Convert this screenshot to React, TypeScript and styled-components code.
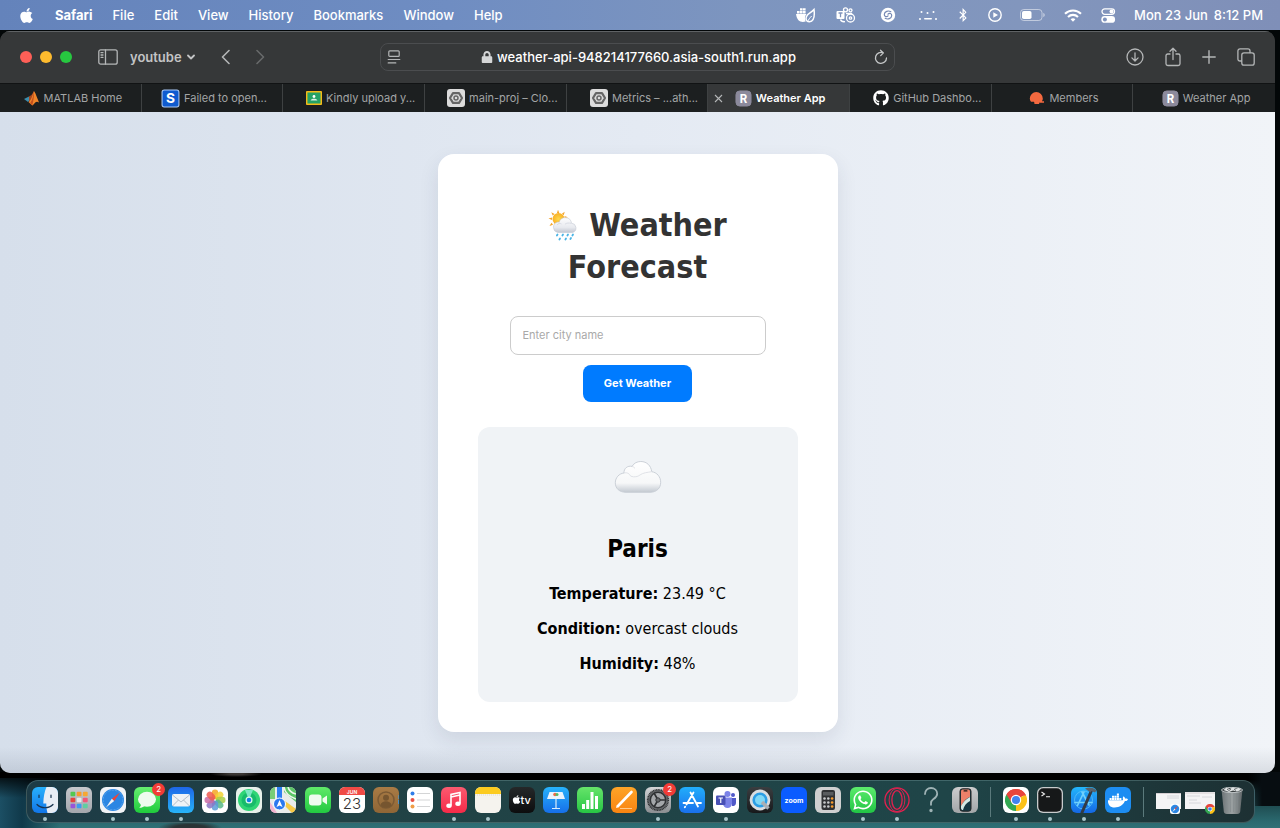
import React from "react";
import styled, { createGlobalStyle } from "styled-components";
import { FaApple, FaBluetoothB, FaDocker, FaGithub, FaLock, FaWhatsapp } from "react-icons/fa";

const uiFont = `Inter, "Liberation Sans", sans-serif`;
const pageFont = `"DejaVu Sans Condensed", "DejaVu Sans", "Noto Sans", sans-serif`;

const GlobalStyle = createGlobalStyle`
  *, *::before, *::after { box-sizing: border-box; }
  body { margin: 0; background: #030708; font-family: ${uiFont}; }
  button, input { font-family: inherit; }
  svg { display: block; flex: none; }
`;

/* ---------- desktop ---------- */

const Desktop = styled.div`
  min-height: 100vh;
  display: flex;
  flex-direction: column;
  background:
    radial-gradient(ellipse 32px 7px at 190px 100%, #2a3436 50%, transparent),
    radial-gradient(ellipse 26px 3px at 236px calc(100% - 54px), #3a3634 30%, transparent),
    linear-gradient(180deg, #000 0, transparent 26px) 0 100% / 60px 56px no-repeat,
    linear-gradient(90deg, #1c4f64 0, #10394a 22px, transparent 60px) 0 100% / 100% 50px no-repeat,
    linear-gradient(90deg, transparent calc(100% - 32px), #070d11 calc(100% - 18px)) 0 calc(100% - 22px) / 100% 34px no-repeat,
    linear-gradient(180deg, #000 0, #000 8px, #17383c 22px, #2b6a70 50px, #307076 56px) 0 100% / 100% 56px no-repeat,
    #030708;
`;

const MenuBar = styled.header`
  height: 30px;
  padding: 0 17px 0 18px;
  display: flex;
  align-items: center;
  justify-content: space-between;
  background: linear-gradient(90deg, #6483bb 0%, #6f8dc2 35%, #7d95bf 58%, #8296bd 80%, #7f8fb8 100%);
  color: #fff;
  font-size: 13px;
  font-weight: 500;
  white-space: nowrap;
`;

const MenuGroup = styled.nav`
  display: flex;
  align-items: center;
  gap: 20px;
`;

const MenuButton = styled.button<{ $bold?: boolean }>`
  padding: 0;
  border: 0;
  background: none;
  color: inherit;
  font-size: 13px;
  line-height: 16px;
  font-weight: ${(p) => (p.$bold ? 700 : 500)};
`;

const StatusGroup = styled.div`
  display: flex;
  align-items: center;
  gap: 18px;
`;

const Clock = styled.time`
  display: flex;
  gap: 6px;
`;

/* ---------- browser window ---------- */

const BrowserWindow = styled.main`
  flex: 1;
  margin: 1px 5px 0 0;
  display: flex;
  flex-direction: column;
  border-radius: 10px;
  overflow: hidden;
  background: #363839;
`;

const Toolbar = styled.div`
  height: 52px;
  padding: 0 20px;
  display: grid;
  grid-template-columns: 1fr 515px 1fr;
  align-items: center;
  box-shadow: inset 0 1px #5f6264;
  background: #363839;
  color: #b4b6b7;
`;

const ToolGroup = styled.div<{ $gap: number; $end?: boolean }>`
  display: flex;
  align-items: center;
  gap: ${(p) => p.$gap}px;
  justify-content: ${(p) => (p.$end ? "flex-end" : "flex-start")};
`;

const TrafficLight = styled.button<{ $color: string }>`
  width: 12px;
  height: 12px;
  padding: 0;
  border: 0;
  border-radius: 50%;
  background: ${(p) => p.$color};
`;

const IconButton = styled.button<{ $dim?: boolean }>`
  padding: 0;
  border: 0;
  background: none;
  color: ${(p) => (p.$dim ? "#686a6b" : "#b4b6b7")};
`;

const ProfileButton = styled(IconButton)`
  display: flex;
  align-items: center;
  gap: 5px;
  color: #c3c4c5;
  font-size: 13px;
  line-height: 18px;
  font-weight: 600;
`;

const AddressBar = styled.div`
  height: 28px;
  padding: 0 6px;
  display: grid;
  grid-template-columns: 16px 1fr 14px;
  align-items: center;
  border: 1px solid #4b4d4f;
  border-radius: 8px;
  color: #fff;
`;

const Address = styled.span`
  display: flex;
  align-items: center;
  justify-content: center;
  gap: 4px;
  font-size: 13px;
  font-weight: 500;
`;

const TabStrip = styled.div`
  height: 29px;
  display: grid;
  grid-template-columns: repeat(9, minmax(0, 1fr));
  border-top: 1px solid #111314;
  background: #1c1f20;
`;

const Tab = styled.button<{ $active?: boolean; $long?: boolean }>`
  padding: 0 0 0 ${(p) => (p.$long ? 14 : p.$active ? 0 : 4)}px;
  display: flex;
  align-items: center;
  justify-content: center;
  gap: 4px;
  border: 0;
  border-right: 1px solid #3e4142;
  background: ${(p) => (p.$active ? "#363839" : "transparent")};
  color: ${(p) => (p.$active ? "#fff" : "#a3a5a6")};
  font-size: 11px;
  font-weight: ${(p) => (p.$active ? 600 : 400)};
  white-space: nowrap;
  &:last-child { border-right: 0; }
`;

const CloseMark = styled.svg`
  margin-right: 8px;
  margin-left: -18px;
`;

const Viewport = styled.div`
  flex: 1;
  padding: 40px 0;
  display: flex;
  align-items: center;
  justify-content: center;
  background:
    linear-gradient(0deg, rgba(70, 80, 100, 0.14), transparent 26px),
    linear-gradient(90deg, #d6dfeb 0%, #e4eaf3 50%, #f1f4f8 100%);
`;

/* ---------- weather app ---------- */

const Card = styled.section`
  width: 400px;
  padding: 50px 40px 30px;
  border-radius: 16px;
  background: #fff;
  box-shadow: 0 8px 20px rgba(40, 50, 80, 0.1);
  color: #000;
  font-family: ${pageFont};
  text-align: center;
`;

const Title = styled.h1`
  margin: 0 0 28px;
  color: #333;
  font-size: 32px;
  line-height: 42px;
  font-weight: 700;
`;

const TitleIcon = styled.svg`
  && { display: inline-block; }
  vertical-align: -5px;
`;

const SearchForm = styled.form`
  display: flex;
  flex-direction: column;
  align-items: center;
  gap: 10px;
  font-family: ${uiFont};
`;

const CityInput = styled.input`
  width: 80%;
  height: 39px;
  padding: 0 12px;
  border: 1px solid #ccc;
  border-radius: 8px;
  background: #fff;
  font-size: 11px;
  &::placeholder { color: #a9a9a9; opacity: 1; }
`;

const SubmitButton = styled.button`
  height: 37px;
  padding: 0 21px;
  border: 0;
  border-radius: 8px;
  background: #007bff;
  color: #fff;
  font-size: 11px;
  font-weight: 700;
`;

const Result = styled.div`
  margin-top: 25px;
  padding: 30px 20px 21px;
  display: flex;
  flex-direction: column;
  align-items: center;
  border-radius: 12px;
  background: #f0f3f6;
`;

const City = styled.h2`
  margin: 38px 0 11px;
  font-size: 24px;
  line-height: 32px;
  font-weight: 700;
`;

const Reading = styled.p`
  margin: 0;
  font-size: 16px;
  line-height: 35px;
`;

/* ---------- dock ---------- */

const DockArea = styled.footer`
  height: 55px;
  padding: 7px 25px 0 26px;
`;

const DockBar = styled.div`
  height: 43px;
  padding: 6px 10px 0 5px;
  display: flex;
  align-items: flex-start;
  border: 1px solid rgba(150, 190, 190, 0.28);
  border-radius: 12px;
  background: linear-gradient(90deg, #1d3b46, #214245 25%, #1f4548 75%, #1d3033);
`;

const DockApps = styled.div<{ $grow?: boolean }>`
  flex: ${(p) => (p.$grow ? 1 : "none")};
  display: flex;
  justify-content: space-between;
  gap: 8px;
`;

const DockItem = styled.button`
  position: relative;
  width: 26px;
  padding: 0;
  display: flex;
  flex-direction: column;
  align-items: center;
  gap: 4px;
  border: 0;
  background: none;
`;

const RunningDot = styled.span`
  width: 4px;
  height: 4px;
  border-radius: 50%;
  background: #a9c6ca;
`;

const Badge = styled.span`
  position: absolute;
  top: -4px;
  right: -5px;
  width: 13px;
  height: 13px;
  border-radius: 50%;
  background: #f23b36;
  color: #fff;
  font-size: 8px;
  line-height: 13px;
  text-align: center;
`;

const Divider = styled.span`
  width: 1px;
  height: 30px;
  margin: 0 12px;
  background: #5b7a7c;
`;

const DockWindows = styled.div`
  display: flex;
  align-items: flex-start;
  gap: 4px;
`;

/* ---------- menu bar glyphs ---------- */

const DockerLeaf = () => (
  <svg width="20" height="18" viewBox="0 0 20 18" fill="#fff">
    <path d="M0 8h10.500c-1.800 2-2 5-.8 7.500-4.500 1.300-8.700 0-9.700-7.500z" />
    <path d="M1 5h2.600v2.600H1zM4 5h2.600v2.600H4zM7 5h2.600v2.600H7zM4 2.200h2.600v2.300H4zM7 2.200h2.600v2.300H7z" />
    <path d="M18 3.500c.8 6 .5 11.500-4.500 12.200-3.300.3-4.200-3-2.800-5.600C12 7.500 15.300 6.800 18 3.500z" fill="none" stroke="#fff" strokeWidth="1.500" />
    <path d="M11.500 16c1-2.500 2.400-4.300 4.200-6" fill="none" stroke="#fff" />
  </svg>
);

const TeamsStatus = () => (
  <svg width="24" height="18" viewBox="0 0 24 18" fill="none" stroke="#fff" strokeWidth="1.300">
    <rect x="2.500" y="5" width="8" height="8" rx="1" fill="#fff" stroke="none" />
    <path d="M4.500 7h4M6.500 7v4.300" stroke="#8094bd" />
    <circle cx="11.500" cy="3.800" r="2" />
    <circle cx="16.500" cy="4.300" r="1.500" />
    <path d="M6.500 13.500c.5 1.600 2 2.500 4.500 2.200M12 7.500h6" />
    <circle cx="16.500" cy="12" r="4" />
    <circle cx="16.500" cy="12" r="1.200" />
  </svg>
);

const Swirl = () => (
  <svg width="24" height="16" viewBox="0 0 24 16">
    <circle cx="12" cy="8" r="7.200" fill="#fff" />
    <path d="M14.800 4.700c-2.600-1.600-6.200-.2-6.500 2.600-.2 2.200 2.300 3.200 3.700 1.500M9.200 11.300c2.600 1.600 6.200.2 6.500-2.600.2-2.200-2.300-3.200-3.700-1.500" fill="none" stroke="#7488b4" strokeWidth="1.200" strokeLinecap="round" />
  </svg>
);

const DotsFace = () => (
  <svg width="20" height="14" viewBox="0 0 20 14" fill="#fff">
    <circle cx="3.500" cy="4" r="1" /><circle cx="9.500" cy="5" r="1" /><circle cx="15.500" cy="4" r="1" />
    <circle cx="2" cy="11" r="1" /><circle cx="18" cy="11" r="1" />
    <rect x="6" y="10" width="8" height="1.600" rx=".8" />
  </svg>
);

const PlayCircle = () => (
  <svg width="14" height="14" viewBox="0 0 14 14">
    <circle cx="7" cy="7" r="6.200" fill="none" stroke="#fff" strokeWidth="1.400" />
    <path d="M5.300 4.200 10 7l-4.700 2.800z" fill="#fff" />
  </svg>
);

const Battery = () => (
  <svg width="26" height="12" viewBox="0 0 26 12">
    <rect x=".5" y=".5" width="21.500" height="11" rx="3.200" fill="none" stroke="#fff" strokeOpacity=".5" />
    <rect x="2" y="2" width="9.500" height="8" rx="1.800" fill="#fff" />
    <path d="M23.300 4v4c1-.3 1.400-1.100 1.400-2s-.4-1.700-1.400-2z" fill="#fff" fillOpacity=".55" />
  </svg>
);

const Wifi = () => (
  <svg width="18" height="13" viewBox="0 0 18 13" fill="none" stroke="#fff" strokeWidth="2.100">
    <path d="M1 4.800c4.500-4.400 11.500-4.400 16 0" />
    <path d="M4 7.900c2.900-2.700 7.100-2.700 10 0" />
    <path d="M9 12.700 6.600 10.200c1.400-1.200 3.400-1.200 4.800 0z" fill="#fff" stroke="none" />
  </svg>
);

const ControlCentre = () => (
  <svg width="16" height="15" viewBox="0 0 16 15">
    <rect x="2" y=".8" width="12.500" height="5.600" rx="2.800" fill="none" stroke="#fff" strokeWidth="1.300" />
    <circle cx="11.500" cy="3.600" r="2" fill="#fff" />
    <rect x="1.300" y="8" width="13.800" height="6.800" rx="3.400" fill="#fff" />
    <circle cx="4.900" cy="11.400" r="2" fill="#8094bd" />
  </svg>
);

/* ---------- toolbar glyphs ---------- */

const line = { fill: "none", stroke: "currentColor", strokeLinecap: "round", strokeLinejoin: "round" } as const;

const SidebarGlyph = () => (
  <svg width="20" height="16" viewBox="0 0 20 16" {...line} strokeWidth="1.300">
    <rect x=".8" y=".8" width="18.400" height="14.400" rx="2" />
    <path d="M7.500 1v14M3 3.700h2M3 6h2M3 8.300h2" />
  </svg>
);

const Chevron = ({ d, w, h, sw }: { d: string; w: number; h: number; sw: number }) => (
  <svg width={w} height={h} viewBox={`0 0 ${w} ${h}`} {...line} strokeWidth={sw}><path d={d} /></svg>
);

const ReaderGlyph = () => (
  <svg width="14" height="14" viewBox="0 0 14 14" {...line} stroke="#b4b6b7" strokeWidth="1.200">
    <rect x="1.800" y=".8" width="10.400" height="5.600" rx="1" /><path d="M1.200 9.500h11.600M1.200 12.900h7.600" />
  </svg>
);

const ReloadGlyph = () => (
  <svg width="14" height="16" viewBox="0 0 14 16" {...line} stroke="#c4c6c7" strokeWidth="1.300">
    <path d="M9.300 3.900A5.500 5.500 0 1 0 12.500 9M6.500 1.200l2.900 2.700-2.700 2.700" />
  </svg>
);

const DownloadGlyph = () => (
  <svg width="18" height="18" viewBox="0 0 18 18" {...line} strokeWidth="1.300">
    <circle cx="9" cy="9" r="8" /><path d="M9 4.800v8M5.900 9.900 9 13l3.100-3.100" />
  </svg>
);

const ShareGlyph = () => (
  <svg width="16" height="20" viewBox="0 0 16 20" {...line} strokeWidth="1.300">
    <path d="M5 7H2.800C1.700 7 1 7.700 1 8.800v7.900c0 1.100.7 1.800 1.800 1.800h10.400c1.100 0 1.800-.7 1.800-1.800V8.800C15 7.700 14.300 7 13.200 7H11M8 12.500V1.500M5 4.300l3-3 3 3" />
  </svg>
);

const PlusGlyph = () => (
  <svg width="14" height="14" viewBox="0 0 14 14" {...line} strokeWidth="1.400"><path d="M7 .8v12.400M.8 7h12.400" /></svg>
);

const TabsGlyph = () => (
  <svg width="18" height="18" viewBox="0 0 18 18" {...line} strokeWidth="1.300">
    <rect x="4.800" y="4.800" width="12.400" height="12.400" rx="2.200" />
    <path d="M4.500 13H3c-1.300 0-2.100-.8-2.100-2.100V3C.9 1.700 1.700.9 3 .9h7.900c1.300 0 2.100.8 2.100 2.100v1.500" />
  </svg>
);

/* ---------- tab icons ---------- */

const Matlab = () => (
  <svg width="17" height="16" viewBox="0 0 17 16">
    <path d="M1 9 6 6.500l2.500 2L5 12z" fill="#3d8fae" />
    <path d="M6 6.500 8.500 5c1-1 1.700-3 2.500-4L9 9.500l-3 3z" fill="#a9471f" />
    <path d="M11 1c1.800 2.500 3.500 8 5 11.500-1.500-1-2.700-1-4 .2-.8 1-1.600 2.200-2.800 2.800L5.500 12c2.500-.8 4-7 5.500-11z" fill="#f0852a" />
    <path d="M11 1c.2 4-.3 9.500-1.800 14.500l-2-2.500C9.500 10 10.300 5 11 1z" fill="#c44f1c" />
  </svg>
);

const LetterTile = ({ letter, bg, edge }: { letter: string; bg: string; edge?: string }) => (
  <svg width={edge ? 19 : 17} height={edge ? 19 : 17} viewBox="0 0 18 18">
    <rect x="1" y="1" width="16" height="16" rx={edge ? 2 : 4} fill={bg} stroke={edge ?? bg} />
    <text x="9" y="13.500" textAnchor="middle" fontFamily="Inter, sans-serif" fontSize={edge ? 13 : 12} fontWeight="700" fill="#fff">{letter}</text>
  </svg>
);

const Classroom = () => (
  <svg width="16" height="14" viewBox="0 0 16 14">
    <rect x=".7" y=".7" width="14.600" height="12.600" rx=".6" fill="#25a265" stroke="#f5bb18" strokeWidth="1.500" />
    <circle cx="8" cy="5.500" r="1.400" fill="#fff" /><path d="M4.600 9.500c.4-2.300 6.400-2.300 6.800 0z" fill="#d9f0e3" />
  </svg>
);

const CloudConsole = () => (
  <svg width="18" height="18" viewBox="0 0 18 18">
    <rect width="18" height="18" rx="3" fill="#dcdcdc" />
    <path d="M6 4.200h6L15 9l-3 4.800H6L3 9z" fill="none" stroke="#666" strokeWidth="2.200" strokeLinejoin="round" />
    <circle cx="9" cy="9" r="2" fill="none" stroke="#666" strokeWidth="1.500" />
  </svg>
);

const Members = () => (
  <svg width="16" height="14" viewBox="0 0 16 14" fill="#f4693f">
    <path d="M.8 7.500a6.500 6.500 0 0 1 13 0c0 1.300-.5 2.200-1 2.800H15v1.500h-5l.3 1.200H5.500l-.4-2.200H2C1.200 9.900.8 8.700.8 7.500z" />
  </svg>
);

/* ---------- weather pictures ---------- */

const SunRain = () => (
  <TitleIcon width="31" height="32" viewBox="0 0 31 32" role="img" aria-label="Sun behind rain cloud">
    <defs>
      <linearGradient id="rainCloud" x1="0" y1="0" x2="0" y2="1"><stop offset="0" stopColor="#fdfdfe" /><stop offset=".65" stopColor="#e8eaef" /><stop offset="1" stopColor="#c3c7d1" /></linearGradient>
      <radialGradient id="sun"><stop offset="0" stopColor="#ffd84a" /><stop offset="1" stopColor="#f8b026" /></radialGradient>
    </defs>
    <path d="M10 .8l1.300 3.200H8.900zM3.300 3.200l3.300 1.700-1.900 1.700zM.5 9.400l3.500-1v2.500zM1.500 17l2-3.300 1.500 2zM16.700 2.700l-.9 3.500-1.900-1.400zM20 8.200l-3.200.9-.4-2z" fill="#f5a62d" />
    <circle cx="10.500" cy="10" r="6" fill="url(#sun)" />
    <path d="M10 23.500a5.300 5.300 0 0 1-.8-10.300c.7-.2 1.400-.2 2 0a6.300 6.300 0 0 1 12.300 1 4.800 4.800 0 0 1 1.300 9.300z" fill="url(#rainCloud)" stroke="#c4c9d4" strokeWidth=".6" />
    <path d="M9 16c1-1.500 3-2 4.500-1M17 15.200c1.500-1.300 4-1.500 6.300-.8" fill="none" stroke="#cfd3dc" strokeWidth=".7" />
    <path d="M9.500 25.500l-.6 1M15 25.500l-.6 1M20 25.500l-.6 1M25 25.500l-.6 1M12 29.500l-.6 1M18 29.500l-.6 1M23 29l-.6 1" stroke="#4ab4e6" strokeWidth="1.800" strokeLinecap="round" />
  </TitleIcon>
);

const Cloud = () => (
  <svg width="48" height="38" viewBox="0 0 48 38" role="img" aria-label="Cloud">
    <defs>
      <linearGradient id="cloud" x1="0" y1="0" x2="0" y2="1"><stop offset="0" stopColor="#fff" /><stop offset=".7" stopColor="#f6f7f8" /><stop offset="1" stopColor="#c3c9d1" /></linearGradient>
    </defs>
    <path d="M12 35.300C5.500 35.300 1.300 31.500 1.300 25.800c0-5 3.700-9.300 8.700-9.800-.3-4.500 3.600-7.700 8-6.600C20 6 23.200 4.500 26.800 4.500c6 0 10.300 4.300 10.900 10.200 5.300.7 9 5.200 9 10.600 0 5.700-4 10-10.700 10z" fill="url(#cloud)" stroke="#c6ccd4" strokeWidth=".9" />
    <path d="M18 9.400c1.300.3 2.300 1 3 2M10 16c3-.8 5 .2 6.800 3.200 3.500 1.300 7 .6 9.300-1.300 2.500-2 7.500-2.600 11.600-3.200" fill="none" stroke="#dcdfe4" strokeWidth=".9" />
  </svg>
);

/* ---------- dock icons ---------- */

const Tile = ({ fill, to, id, children }: { fill: string; to?: string; id?: string; children?: React.ReactNode }) => (
  <svg width="26" height="26" viewBox="0 0 26 26">
    {to && <defs><linearGradient id={id} x1="0" y1="0" x2="0" y2="1"><stop stopColor={fill} /><stop offset="1" stopColor={to} /></linearGradient></defs>}
    <rect width="26" height="26" rx="6" fill={to ? `url(#${id})` : fill} />
    {children}
  </svg>
);

const Finder = () => (
  <Tile id="finder" fill="#28b0fb" to="#1276e8">
    <path d="M14.500 0H20a6 6 0 0 1 6 6v14a6 6 0 0 1-6 6h-4.500c-.8-3-1.200-6-1.200-9.500h-3C11.500 10 12.500 4.500 14.500 0z" fill="#e8edf4" />
    <path d="M7 8v2.500M19 8v2.500M5 17.500c4 4.300 12 4.300 16 0" fill="none" stroke="#17324d" strokeWidth="1.200" strokeLinecap="round" />
  </Tile>
);

const Launchpad = () => {
  const colors = ["#52c84f", "#f79a2e", "#f5a733", "#e2453f", "#e8e8ea", "#f2567a", "#9856d8", "#3d9df0", "#5fd0a0"];
  return (
    <Tile id="launch" fill="#c6c8cc" to="#a4a7ad">
      {colors.map((c, i) => <rect key={i} x={4.500 + (i % 3) * 6.200} y={4.700 + Math.floor(i / 3) * 6} width="4.800" height="4.600" rx="1" fill={c} />)}
    </Tile>
  );
};

const Compass = () => (
  <>
    <circle cx="13" cy="13" r="11" fill="#2b86e3" />
    <circle cx="13" cy="13" r="9.800" fill="none" stroke="#82c3f8" strokeWidth="1" strokeDasharray=".5 1" />
    <path d="m20 5.500-5.800 8.600-2.400-2.400z" fill="#f04438" /><path d="M6 20.500l5.800-8.800 2.400 2.400z" fill="#f2f4f7" />
  </>
);

const Photos = () => {
  const colors = ["#f5a623", "#f3d334", "#a9cf46", "#58b98a", "#5b9bd8", "#8b75c4", "#c86ba4", "#ee5a4f"];
  return (
    <Tile fill="#fff">
      {colors.map((c, i) => <rect key={c} x="9.800" y="2.500" width="6.400" height="9.700" rx="3.200" fill={c} fillOpacity=".85" transform={`rotate(${i * 45} 13 13)`} />)}
    </Tile>
  );
};

const Maps = () => (
  <svg width="26" height="26" viewBox="0 0 26 26">
    <defs><clipPath id="mapClip"><rect width="26" height="26" rx="6" /></clipPath></defs>
    <g clipPath="url(#mapClip)">
      <rect width="26" height="26" fill="#e9ecea" />
      <path d="M14 0h12v15L14 5z" fill="#5bc566" /><path d="M0 0h5v12H0z" fill="#78cd76" />
      <path d="M14 0c1 7 6 10 12 12M18 0c1 4 4 6 8 7" stroke="#eef5ec" strokeWidth="1.600" fill="none" />
      <path d="M7 0h5v13H7z" fill="#2d7ff2" />
      <path d="M0 15l7 11H0z" fill="#f3b3cf" /><path d="m15 14 11 8v4h-4L13 17z" fill="#f6c945" />
      <circle cx="9.500" cy="17" r="6" fill="#2b79ef" stroke="#fff" /><path d="m9.500 13 3 7-3-1.500-3 1.500z" fill="#fff" />
    </g>
  </svg>
);

const Calendar = () => (
  <Tile fill="#fff">
    <path d="M0 8V6a6 6 0 0 1 6-6h14a6 6 0 0 1 6 6v2z" fill="#f04a45" />
    <text x="13" y="6.500" textAnchor="middle" fontFamily="Inter, sans-serif" fontSize="5" fontWeight="600" fill="#fff">JUN</text>
    <text x="13" y="21.500" textAnchor="middle" fontFamily="Inter, sans-serif" fontSize="15" fontWeight="300" fill="#333">23</text>
  </Tile>
);

const Gear = () => (
  <Tile id="gear" fill="#d2d4d6" to="#8b8e91">
    <circle cx="13" cy="13" r="10.300" fill="#66696c" stroke="#2f3133" strokeWidth="1.600" strokeDasharray="1 .6" />
    <circle cx="13" cy="13" r="7.700" fill="#a4a7aa" stroke="#2f3133" strokeWidth="1.500" />
    <path d="M13 13h8M13 13 9 6M13 13 9 20" stroke="#2f3133" strokeWidth="1.600" /><circle cx="13" cy="13" r="2.200" fill="#65686b" stroke="#2f3133" />
  </Tile>
);

const Chrome = ({ size, x = 0, y = 0 }: { size: number; x?: number; y?: number }) => (
  <svg x={x} y={y} width={size} height={size} viewBox="0 0 24 24">
    <path d="M12 12 1.600 6A12 12 0 0 1 22.400 6z" fill="#e8453c" />
    <path d="M12 12 22.400 6A12 12 0 0 1 12 24z" fill="#fbc116" />
    <path d="M12 12v12A12 12 0 0 1 1.600 6z" fill="#33a852" />
    <path d="M1.600 6 7.300 15 12 7h10.900l-.5-1A12 12 0 0 0 1.600 6z" fill="#e8453c" />
    <circle cx="12" cy="12" r="5.700" fill="#fff" /><circle cx="12" cy="12" r="4.400" fill="#4183f0" />
  </svg>
);

type App = { name: string; icon: React.ReactNode; running?: boolean; badge?: number };

const apps: App[] = [
  { name: "Finder", icon: <Finder />, running: true },
  { name: "Launchpad", icon: <Launchpad /> },
  { name: "Safari", icon: <Tile fill="#f1f3f6"><Compass /></Tile>, running: true },
  { name: "Messages", running: true, badge: 2, icon: (
    <Tile id="msg" fill="#66ef70" to="#1fcb3c"><ellipse cx="13" cy="12.300" rx="9" ry="7.500" fill="#eefbee" /><path d="M7 17c0 2-.8 3-2 3.800 2.200.2 4-.5 5.500-2z" fill="#eefbee" /></Tile>) },
  { name: "Mail", running: true, icon: (
    <Tile id="mail" fill="#1e66e8" to="#27b4f8"><rect x="4" y="7" width="18" height="12.500" rx="1.800" fill="#eff2f6" /><path d="m4.500 8 8.500 7 8.500-7M4.500 19l6-6M21.500 19l-6-6" fill="none" stroke="#a4b0bd" strokeWidth=".8" /></Tile>) },
  { name: "Photos", icon: <Photos /> },
  { name: "Find My", icon: (
    <Tile fill="#e7f0ea"><circle cx="13" cy="13" r="11" fill="#2fd575" /><circle cx="13" cy="13" r="7.500" fill="#17bb6b" /><path d="M13 13 9 3h8z" fill="#7be8c2" /><circle cx="13" cy="13" r="3.500" fill="#dffbee" /><circle cx="13" cy="13" r="2.300" fill="#157de8" /></Tile>) },
  { name: "Maps", icon: <Maps /> },
  { name: "FaceTime", icon: (
    <Tile id="ft" fill="#5fe969" to="#22c941"><rect x="4" y="7.500" width="12.500" height="11" rx="3" fill="#f0fbf0" /><path d="m17.500 11.500 4.500-3v9l-4.500-3z" fill="#f0fbf0" /></Tile>) },
  { name: "Calendar", icon: <Calendar /> },
  { name: "Contacts", icon: (
    <Tile id="contacts" fill="#a97b45" to="#8f6636"><circle cx="13" cy="13" r="8" fill="none" stroke="#7b5a34" strokeWidth="1.500" /><circle cx="13" cy="10.800" r="3" fill="#76552f" /><path d="M7.500 18c1-5 10-5 11 0-2 3.500-9 3.500-11 0z" fill="#76552f" /><path d="M25.500 8v4" stroke="#6b8b9a" /><path d="M25.500 13v4" stroke="#4c8dc4" /></Tile>) },
  { name: "Reminders", icon: (
    <Tile fill="#fff"><circle cx="5.500" cy="6.500" r="2" fill="#2f7de8" /><circle cx="5.500" cy="13" r="2" fill="#e94f43" /><circle cx="5.500" cy="19.500" r="2" fill="#ef9d47" /><path d="M10 6.500h13M10 13h13M10 19.500h13" stroke="#c9cacc" strokeWidth=".8" /></Tile>) },
  { name: "Music", running: true, icon: (
    <Tile id="music" fill="#fb5a70" to="#f62a48"><path d="M10 18.500V7.500l9-2v11M10 10l9-2" fill="none" stroke="#fff" strokeWidth="1.600" /><ellipse cx="8" cy="18.700" rx="2.700" ry="2.200" fill="#fff" /><ellipse cx="17" cy="16.800" rx="2.700" ry="2.200" fill="#fff" /></Tile>) },
  { name: "Notes", running: true, icon: (
    <Tile fill="#f5f3ee"><path d="M0 7V6a6 6 0 0 1 6-6h14a6 6 0 0 1 6 6v1z" fill="#fccb1f" /><path d="M0 8h26" stroke="#d9d2bd" strokeDasharray="1 1" strokeWidth=".7" /></Tile>) },
  { name: "Apple TV", icon: (
    <Tile id="tv" fill="#252829" to="#0c0d0e"><FaApple x="2.500" y="7.500" size={10} color="#fff" /><text x="11.500" y="16.500" fontFamily="Inter, sans-serif" fontSize="11" fontWeight="500" fill="#fff">tv</text></Tile>) },
  { name: "Keynote", icon: (
    <Tile id="key" fill="#27b2fb" to="#166fe9"><path d="M6.500 5h13L22 12H4z" fill="#e9f4fd" /><path d="M13 12v9M9 21.500h8" stroke="#d9ecfb" strokeWidth="1.200" /><circle cx="12" cy="7.500" r="1.800" fill="#ee6a4a" /><circle cx="14" cy="7.500" r="1.500" fill="#52ba63" /></Tile>) },
  { name: "Numbers", icon: (
    <Tile id="num" fill="#66e46a" to="#27c644"><path d="M5 17h3v5H5zM9.200 13h3v9h-3zM13.500 5h3v17h-3zM18 9h3v13h-3z" fill="#fff" /></Tile>) },
  { name: "Pages", icon: (
    <Tile id="pages" fill="#fda428" to="#f98411"><path d="M20.500 5 7 19" stroke="#fff" strokeWidth="2.600" strokeLinecap="round" /><path d="m5 21 .8-3 2.200 2z" fill="#fff" /><path d="M9 21.500h12" stroke="#ffd9a8" strokeWidth=".8" /></Tile>) },
  { name: "System Settings", running: true, badge: 2, icon: <Gear /> },
  { name: "App Store", icon: (
    <Tile id="store" fill="#22aefb" to="#1a70ec"><path d="M14.500 5.500 7.500 17.500M11.500 5.500l7.500 14M4.500 16h9.500M18.500 16h3.500M6.200 19.700l-.4.600" stroke="#fff" strokeWidth="1.800" strokeLinecap="round" /></Tile>) },
  { name: "Teams", running: true, icon: (
    <Tile fill="#fff"><circle cx="14.500" cy="7" r="3" fill="#7b83e8" /><circle cx="20" cy="8" r="2" fill="#5059c9" /><path d="M10 10.500h9v6a4.500 4.500 0 0 1-9 0z" fill="#7b83e8" /><path d="M19 11h4v5a3.200 3.200 0 0 1-4 3z" fill="#5059c9" /><rect x="3" y="8.500" width="9.500" height="9.500" rx="1" fill="#4850b5" /><path d="M5.500 11h4.500M7.750 11v5" stroke="#fff" strokeWidth="1.200" /></Tile>) },
  { name: "QuickTime Player", icon: (
    <Tile id="qt" fill="#3a3d40" to="#17191b"><circle cx="13" cy="13" r="9" fill="#2b9ee6" stroke="#d9dde1" strokeWidth="2.800" /><circle cx="13" cy="13" r="5" fill="#7fd8f7" /><path d="m15 15 6.500 6.500" stroke="#a9afb5" strokeWidth="3.600" /></Tile>) },
  { name: "Zoom", icon: (
    <Tile fill="#0b5cff"><text x="13" y="15.500" textAnchor="middle" fontFamily="Inter, sans-serif" fontSize="7" fontWeight="700" fill="#fff">zoom</text></Tile>) },
  { name: "Calculator", icon: (
    <Tile fill="#cfd0d0"><rect x="6.500" y="3" width="13.500" height="20" rx="2" fill="#303234" /><rect x="8" y="5" width="10.500" height="3.500" fill="#595c5e" />
      {[0, 1, 2].map((r) => [0, 1, 2].map((c) => <circle key={`${r}${c}`} cx={9.500 + c * 3.800} cy={11.500 + r * 4} r="1.300" fill={c === 2 ? "#f79a2c" : "#c9cbcc"} />))}</Tile>) },
  { name: "WhatsApp", running: true, icon: <Tile id="wa" fill="#5cec6c" to="#21c545"><FaWhatsapp x="2" y="2" size={22} color="#fff" /></Tile> },
  { name: "Opera", running: true, icon: (
    <svg width="28" height="26" viewBox="0 -1 28 28" fill="none" stroke="#e3204f" strokeWidth="1.400"><circle cx="14" cy="13" r="13" /><ellipse cx="14" cy="13" rx="5.500" ry="10" /><ellipse cx="14" cy="13" rx="8.500" ry="12.600" strokeWidth="1" /></svg>) },
  { name: "Help", icon: (
    <svg width="26" height="26" viewBox="0 0 26 26" fill="none" stroke="#9fb3b5" strokeWidth="1.800" strokeLinecap="round"><path d="M7 7c0-3.500 2.700-6 6-6 3.500 0 6.200 2.300 6.200 5.700 0 3-2 4.300-4 5.600-1.600 1.100-2.200 2-2.200 4v1.500" /><circle cx="13" cy="23.500" r=".8" fill="#9fb3b5" /></svg>) },
  { name: "iPhone Mirroring", icon: (
    <Tile id="mirror" fill="#cbcccd" to="#a3a6a8"><rect x="8" y="1.800" width="11" height="22.400" rx="2.500" fill="#173944" stroke="#222" /><path d="M9 4.500C9 3 10 2.500 11 2.500h5c1 0 2 .5 2 2V10c-5 2-7 5-9 10z" fill="#ee8069" /><path d="M18 10v4c-4 2-6 5-7 9-1 0-2-.5-2-2v-2c2-4 5-7 9-9z" fill="#d5e9e5" /><rect x="11.500" y="3.300" width="4" height="1.200" rx=".6" fill="#161616" /></Tile>) },
];

const recentApps: App[] = [
  { name: "Chrome", running: true, icon: <Tile fill="#fff"><Chrome size={22} x={2} y={2} /></Tile> },
  { name: "Terminal", running: true, icon: (
    <Tile fill="#c9cbcc"><rect x="1.300" y="1.300" width="23.400" height="23.400" rx="5" fill="#161819" /><path d="m4.500 5 3 2-3 2M9 9.700h4" fill="none" stroke="#eee" strokeWidth="1.100" /></Tile>) },
  { name: "Xcode", running: true, icon: (
    <Tile id="xcode" fill="#23b6fb" to="#1467e4"><circle cx="12.500" cy="13" r="9" fill="none" stroke="#5bc2f8" strokeWidth=".8" /><path d="m13 5-6.500 13.500M11 5l7 13M4 15.500h17" stroke="#6fd0fb" strokeWidth="1.700" strokeLinecap="round" /><path d="m20.500 3.500-9.500 22" stroke="#333b45" strokeWidth="3" strokeLinecap="round" /><path d="M14 1.500c4-2 8.500-1.300 11.500 2l-1.500 2-3.500-1.500-1 1.500z" fill="#59616a" /></Tile>) },
  { name: "Docker", running: true, icon: <Tile fill="#1d8df2"><FaDocker x="3" y="3.500" size={20} color="#fff" /></Tile> },
];

const DockIcon = ({ app }: { app: App }) => (
  <DockItem type="button" aria-label={app.name}>
    {app.icon}
    {app.running && <RunningDot />}
    {app.badge && <Badge>{app.badge}</Badge>}
  </DockItem>
);

const MiniWindow = ({ wide }: { wide?: boolean }) => (
  <svg width={wide ? 31 : 25} height="28" viewBox={`0 0 ${wide ? 31 : 25} 28`}>
    <rect y={wide ? 5 : 6} width={wide ? 30 : 25} height={wide ? 17 : 16} fill="#f4f4f5" />
    <path d={wide ? "M0 6h30" : "M0 6.500h25"} stroke="#d5cfd2" />
    <path d={wide ? "M2 9h13M17 10h10M4 13h8M4 16h12" : "M11 9h12M11 11h12"} stroke="#d1d2d5" strokeWidth=".8" />
    {wide ? <Chrome size={10} x={20} y={17} /> : <svg x="14" y="17" width="10" height="10" viewBox="0 0 26 26"><rect width="26" height="26" rx="6" fill="#fff" /><Compass /></svg>}
  </svg>
);

const Trash = () => (
  <svg width="24" height="30" viewBox="0 2 24 30">
    <defs><linearGradient id="trash"><stop stopColor="#6d7476" /><stop offset=".5" stopColor="#9ba1a2" /><stop offset="1" stopColor="#5f6668" /></linearGradient></defs>
    <path d="M1.500 4.500h21l-2.300 22c-.2 1.500-1 2.500-3 2.500H6.800c-2 0-2.800-1-3-2.500z" fill="url(#trash)" />
    <path d="M6 8l1 18M10 8l.5 19M14 8l-.5 19M18 8l-1 18" stroke="#828a8c" strokeWidth=".7" />
    <ellipse cx="12" cy="5" rx="10.500" ry="2.600" fill="#3b4143" stroke="#c3c8c9" strokeWidth=".9" />
    <path d="m3.500 5 3-2.600 3 1.500L13 2.300l3 1.500 3-1 2 2.200-4 1.500-4-1-4 1.500z" fill="#dfe2e2" /><path d="m7 4 2 1.500 2-1.500M14 4l2 1.500" stroke="#62686a" fill="none" />
  </svg>
);

/* ---------- page ---------- */

type TabInfo = { title: string; icon: React.ReactNode; long?: boolean; active?: boolean };

const tabs: TabInfo[] = [
  { title: "MATLAB Home", icon: <Matlab /> },
  { title: "Failed to open...", icon: <LetterTile letter="S" bg="#0f5bd0" edge="#a9c9f5" /> },
  { title: "Kindly upload y...", icon: <Classroom />, long: true },
  { title: "main-proj – Clo...", icon: <CloudConsole />, long: true },
  { title: "Metrics – ...ath...", icon: <CloudConsole />, long: true },
  { title: "Weather App", icon: <LetterTile letter="R" bg="#8c8a9c" />, active: true },
  { title: "GitHub Dashbo...", icon: <FaGithub size={16} color="#fff" />, long: true },
  { title: "Members", icon: <Members /> },
  { title: "Weather App", icon: <LetterTile letter="R" bg="#8c8a9c" /> },
];

const menus = ["File", "Edit", "View", "History", "Bookmarks", "Window", "Help"];

const readings = [
  { label: "Temperature:", value: "23.49 °C" },
  { label: "Condition:", value: "overcast clouds" },
  { label: "Humidity:", value: "48%" },
];

export default function App() {
  return (
    <Desktop>
      <GlobalStyle />
      <MenuBar>
        <MenuGroup aria-label="Menu bar">
          <FaApple size={17} />
          <MenuButton type="button" $bold>Safari</MenuButton>
          {menus.map((m) => <MenuButton key={m} type="button">{m}</MenuButton>)}
        </MenuGroup>
        <StatusGroup>
          <DockerLeaf />
          <TeamsStatus />
          <Swirl />
          <DotsFace />
          <FaBluetoothB size={14} />
          <PlayCircle />
          <Battery />
          <Wifi />
          <ControlCentre />
          <Clock><span>Mon 23 Jun</span><span>8:12 PM</span></Clock>
        </StatusGroup>
      </MenuBar>

      <BrowserWindow>
        <Toolbar>
          <ToolGroup $gap={26}>
            <ToolGroup $gap={8}>
              <TrafficLight type="button" aria-label="Close" $color="#fe5f57" />
              <TrafficLight type="button" aria-label="Minimise" $color="#febb2e" />
              <TrafficLight type="button" aria-label="Zoom" $color="#27c840" />
            </ToolGroup>
            <ToolGroup $gap={12}>
              <IconButton type="button" aria-label="Sidebar"><SidebarGlyph /></IconButton>
              <ProfileButton type="button">youtube<Chevron w={8} h={6} d="M1 1.500l3 3 3-3" sw={1.8} /></ProfileButton>
            </ToolGroup>
            <ToolGroup $gap={26}>
              <IconButton type="button" aria-label="Back"><Chevron w={9} h={16} d="M8 1.500 1.500 8 8 14.500" sw={1.6} /></IconButton>
              <IconButton type="button" aria-label="Forward" $dim><Chevron w={9} h={16} d="M1 1.500 7.500 8 1 14.500" sw={1.6} /></IconButton>
            </ToolGroup>
          </ToolGroup>
          <AddressBar>
            <ReaderGlyph />
            <Address><FaLock size={12} color="#d5d6d7" />weather-api-948214177660.asia-south1.run.app</Address>
            <ReloadGlyph />
          </AddressBar>
          <ToolGroup $gap={21} $end>
            <IconButton type="button" aria-label="Downloads"><DownloadGlyph /></IconButton>
            <IconButton type="button" aria-label="Share"><ShareGlyph /></IconButton>
            <IconButton type="button" aria-label="New tab"><PlusGlyph /></IconButton>
            <IconButton type="button" aria-label="Tab overview"><TabsGlyph /></IconButton>
          </ToolGroup>
        </Toolbar>
        <TabStrip>
          {tabs.map((t, i) => (
            <Tab key={i} type="button" $active={t.active} $long={t.long}>
              {t.active && <CloseMark width="9" height="9" viewBox="0 0 9 9"><path d="M1 1l7 7M8 1 1 8" stroke="#b4b6b7" strokeWidth="1.100" /></CloseMark>}
              {t.icon}
              <span>{t.title}</span>
            </Tab>
          ))}
        </TabStrip>
        <Viewport>
          <Card>
            <Title><SunRain /> Weather<br />Forecast</Title>
            <SearchForm onSubmit={(e) => e.preventDefault()}>
              <CityInput type="text" placeholder="Enter city name" aria-label="Enter city name" />
              <SubmitButton type="submit">Get Weather</SubmitButton>
            </SearchForm>
            <Result>
              <Cloud />
              <City>Paris</City>
              {readings.map((r) => <Reading key={r.label}><strong>{r.label}</strong> {r.value}</Reading>)}
            </Result>
          </Card>
        </Viewport>
      </BrowserWindow>

      <DockArea>
        <DockBar>
          <DockApps $grow>{apps.map((a) => <DockIcon key={a.name} app={a} />)}</DockApps>
          <Divider />
          <DockApps>{recentApps.map((a) => <DockIcon key={a.name} app={a} />)}</DockApps>
          <Divider />
          <DockWindows>
            <MiniWindow />
            <MiniWindow wide />
            <Trash />
          </DockWindows>
        </DockBar>
      </DockArea>
    </Desktop>
  );
}
